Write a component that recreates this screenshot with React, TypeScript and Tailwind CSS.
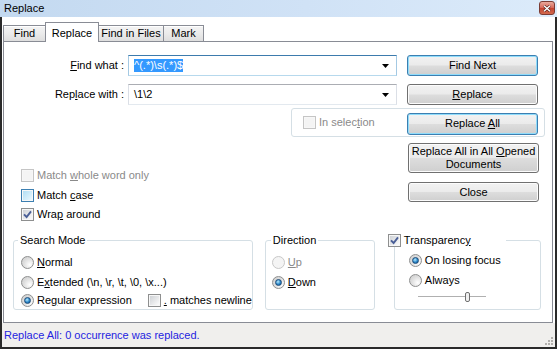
import React from 'react';

function U({ children }: { children: React.ReactNode }) {
  return <span className="underline">{children}</span>;
}

function CheckBox({ checked = false, disabled = false, hot = false }: { checked?: boolean; disabled?: boolean; hot?: boolean }) {
  const outer = disabled ? 'border-[#c5c5c5]' : hot ? 'border-[#3c7fb1]' : 'border-[#8e8f8f]';
  const inner = disabled
    ? 'bg-[#f4f4f4]'
    : hot
      ? 'bg-[linear-gradient(135deg,#b1dff5,#e9f7fe)]'
      : 'bg-[linear-gradient(135deg,#cfd2d6,#fbfbfb)]';
  return (
    <span className={`relative flex h-[13px] w-[13px] shrink-0 border bg-[#f7f7f7] p-[1px] ${outer}`}>
      <span className={`h-full w-full ${inner}`} />
      {checked && (
        <svg className="absolute left-[1px] top-[1px]" width="9" height="9" viewBox="0 0 9 9">
          <path d="M1 4.3 L3.6 7 L8 1.4" fill="none" stroke="#4a5f97" strokeWidth="1.9" />
        </svg>
      )}
    </span>
  );
}

function Radio({ checked = false, disabled = false }: { checked?: boolean; disabled?: boolean }) {
  return (
    <span
      className={`flex h-[13px] w-[13px] shrink-0 items-center justify-center rounded-full border ${
        disabled
          ? 'border-[#c8c8c8] bg-[#f4f4f4]'
          : 'border-[#8e8f8f] bg-[radial-gradient(circle_at_70%_70%,#ffffff,#dedede_55%,#c9c9c9)]'
      }`}
    >
      {checked && (
        <span className="h-[7px] w-[7px] rounded-full border border-[#1d4b78] bg-[radial-gradient(circle_at_40%_35%,#b8ecff,#2b86c8_55%,#0e4f8a)]" />
      )}
    </span>
  );
}

function Button({ children, def = false, className = '' }: { children: React.ReactNode; def?: boolean; className?: string }) {
  return (
    <div
      className={`flex shrink-0 items-center justify-center rounded-[3px] border text-center leading-[13px] bg-[linear-gradient(#f2f2f2,#ebebeb_48%,#dddddd_52%,#cfcfcf)] ${
        def ? 'border-[#3c7fb1] shadow-[inset_0_0_0_1px_#8fdcfb]' : 'border-[#707070] shadow-[inset_0_0_0_1px_#fcfcfc]'
      } ${className}`}
    >
      {children}
    </div>
  );
}

function Combo({ focused = false, children }: { focused?: boolean; children: React.ReactNode }) {
  return (
    <div
      className={`ml-[4px] flex h-[21px] w-[269px] items-center border pl-[5px] pr-[7px] ${
        focused
          ? 'border-x-[#a4c9e3] border-t-[#3d7bad] border-b-[#b7d9ed]'
          : 'border-x-[#dbdfe6] border-t-[#abadb3] border-b-[#e3e9ef]'
      }`}
    >
      <div className="flex-1 leading-[13px]">{children}</div>
      <svg width="7" height="4" viewBox="0 0 7 4">
        <polygon points="0,0 7,0 3.5,4" fill="#000" />
      </svg>
    </div>
  );
}

function Option({ control, children, disabled = false, className = '' }: { control: React.ReactNode; children: React.ReactNode; disabled?: boolean; className?: string }) {
  return (
    <div className={`flex h-[13px] items-center gap-[3px] ${disabled ? 'text-[#8a8a8a]' : ''} ${className}`}>
      {control}
      <span className="whitespace-nowrap leading-[13px]">{children}</span>
    </div>
  );
}

function Tab({ children, active = false, className = '' }: { children: React.ReactNode; active?: boolean; className?: string }) {
  return active ? (
    <div className={`relative z-10 -mb-px -ml-px flex h-[20px] items-start justify-center border border-b-0 border-[#898c95] bg-white pt-[2px] ${className}`}>
      {children}
    </div>
  ) : (
    <div
      className={`-ml-px flex h-[16px] items-center justify-center border border-b-0 border-[#898c95] bg-[linear-gradient(#f4f4f4,#ebebeb_50%,#dedede)] shadow-[inset_0_1px_0_#fff] first:ml-0 ${className}`}
    >
      {children}
    </div>
  );
}

export default function App() {
  return (
    <div className="flex h-[349px] w-[557px] flex-col overflow-hidden bg-white font-['Liberation_Sans',Arial,sans-serif] text-[11px] text-black">
      {/* title bar */}
      <div className="flex h-[17px] shrink-0 items-start justify-between bg-[linear-gradient(90deg,#c3d9f0,#d0e2f6_55%,#dcebfa)] pl-[4px] pr-[2px]">
        <span className="pt-[2px] leading-[13px]">Replace</span>
        <div className="mt-[1px] flex h-[14px] w-[16px] items-center justify-center rounded-[3px] border border-[#7b3b33] bg-[linear-gradient(#e9a99b,#d7685a_48%,#c4432f_52%,#d26a4f)]">
          <svg width="8" height="7" viewBox="0 0 8 7">
            <path d="M1 0.8 L7 6.2 M7 0.8 L1 6.2" stroke="#4a1a14" strokeWidth="2.6" />
            <path d="M1 0.8 L7 6.2 M7 0.8 L1 6.2" stroke="#fff" strokeWidth="1.5" />
          </svg>
        </div>
      </div>

      {/* window body */}
      <div className="flex flex-1 flex-col border-x-2 border-b-2 border-[#2a2a2a]">
        {/* tabs */}
        <div className="flex h-[24px] shrink-0 items-end pl-[1px]">
          <Tab className="w-[43px]">Find</Tab>
          <Tab active className="w-[54px]">Replace</Tab>
          <Tab className="w-[66px]">Find in Files</Tab>
          <Tab className="w-[41px]">Mark</Tab>
        </div>

        {/* tab panel */}
        <div className="ml-[1px] mr-[2px] flex h-[282px] shrink-0 flex-col border border-[#898c95] bg-white">
          {/* find what */}
          <div className="mt-[13px] flex h-[21px] items-center">
            <div className="w-[120px] text-right">
              <U>F</U>ind what :
            </div>
            <Combo focused>
              <span className="bg-[#3399ff] pb-[1px] text-white">^(.*)\s(.*)$</span>
            </Combo>
            <Button def className="ml-[10px] h-[21px] w-[131px]">
              Find Next
            </Button>
          </div>

          {/* replace with */}
          <div className="mt-[8px] flex h-[21px] items-center">
            <div className="w-[120px] text-right">
              Rep<U>l</U>ace with :
            </div>
            <Combo>\1\2</Combo>
            <Button className="ml-[10px] h-[21px] w-[131px]">
              <span>
                <U>R</U>eplace
              </span>
            </Button>
          </div>

          {/* in selection group */}
          <div className="ml-[287px] mt-[3px] flex h-[29px] w-[254px] items-center rounded-[3px] border border-[#d5dfe5] pl-[11px] pr-[6px]">
            <Option disabled control={<CheckBox disabled />}>
              In selec<U>t</U>ion
            </Option>
            <Button def className="ml-auto mt-[2px] h-[22px] w-[131px]">
              <span>
                Replace <U>A</U>ll
              </span>
            </Button>
          </div>

          {/* options + more buttons */}
          <div className="flex h-[97px]">
            <div className="ml-[17px] flex flex-col pt-[32px]">
              <Option disabled control={<CheckBox disabled />}>
                Match <U>w</U>hole word only
              </Option>
              <Option className="mt-[7px]" control={<CheckBox hot />}>
                Match <U>c</U>ase
              </Option>
              <Option className="mt-[6px]" control={<CheckBox checked />}>
                Wra<U>p</U> around
              </Option>
            </div>
            <div className="ml-auto mr-[13px] flex w-[131px] flex-col">
              <Button className="mt-[6px] h-[30px] w-[131px]">
                <span className="whitespace-nowrap">
                  Replace All in All <U>O</U>pened
                  <br />
                  Documents
                </span>
              </Button>
              <Button className="mt-[9px] h-[20px] w-[131px]">Close</Button>
            </div>
          </div>

          {/* group boxes */}
          <div className="ml-[9px] flex items-start">
            <fieldset className="h-[76px] w-[237px] rounded-[3px] border border-[#d5dfe5]">
              <legend className="ml-[4px] px-[2px] leading-[13px]">Search Mode</legend>
              <div className="flex flex-col pl-[7px] pt-[9px]">
                <Option control={<Radio />}>
                  <U>N</U>ormal
                </Option>
                <Option className="mt-[7px]" control={<Radio />}>
                  E<U>x</U>tended (\n, \r, \t, \0, \x...)
                </Option>
                <div className="mt-[5px] flex items-center">
                  <Option control={<Radio checked />}>
                    Re<U>g</U>ular expression
                  </Option>
                  <Option className="ml-[16px]" control={<CheckBox />}>
                    <U>.</U> matches newline
                  </Option>
                </div>
              </div>
            </fieldset>

            <fieldset className="ml-[12px] h-[76px] w-[110px] rounded-[3px] border border-[#d5dfe5]">
              <legend className="ml-[5px] px-[2px] leading-[13px]">Direction</legend>
              <div className="flex flex-col pl-[6px] pt-[9px]">
                <Option disabled control={<Radio disabled />}>
                  <U>U</U>p
                </Option>
                <Option className="mt-[7px]" control={<Radio checked />}>
                  <U>D</U>own
                </Option>
              </div>
            </fieldset>

            <fieldset className="ml-[19px] h-[76px] w-[147px] rounded-[3px] border border-[#d5dfe5]">
              <legend className="-ml-[7px] w-[118px] bg-white">
                <Option control={<CheckBox checked />}>
                  Transparenc<U>y</U>
                </Option>
              </legend>
              <div className="flex flex-col pl-[14px] pt-[7px]">
                <Option control={<Radio checked />}>On losing focus</Option>
                <Option className="mt-[7px]" control={<Radio />}>
                  Always
                </Option>
                <div className="relative ml-[9px] mt-[4px] h-[11px] w-[68px]">
                  <div className="absolute left-0 right-0 top-[5px] h-[2px] border-t border-[#b0b0b0] border-b-[#e8e8e8]" />
                  <div className="absolute left-[47px] top-[1px] h-[10px] w-[5px] rounded-[2px] border border-[#707070] bg-[#f0f0f0]" />
                </div>
              </div>
            </fieldset>
          </div>
        </div>

        {/* status bar */}
        <div className="relative flex flex-1 items-center bg-[#f0efed] pl-[2px] text-[#2424e0]">
          <span className="leading-[13px]">Replace All: 0 occurrence was replaced.</span>
          <svg className="absolute bottom-[1px] right-[1px]" width="11" height="11" viewBox="0 0 11 11">
            {[
              [8, 2],
              [5, 5],
              [8, 5],
              [2, 8],
              [5, 8],
              [8, 8],
            ].map(([x, y], i) => (
              <rect key={i} x={x} y={y} width="2" height="2" fill="#b2b0ad" />
            ))}
          </svg>
        </div>
      </div>
    </div>
  );
}
